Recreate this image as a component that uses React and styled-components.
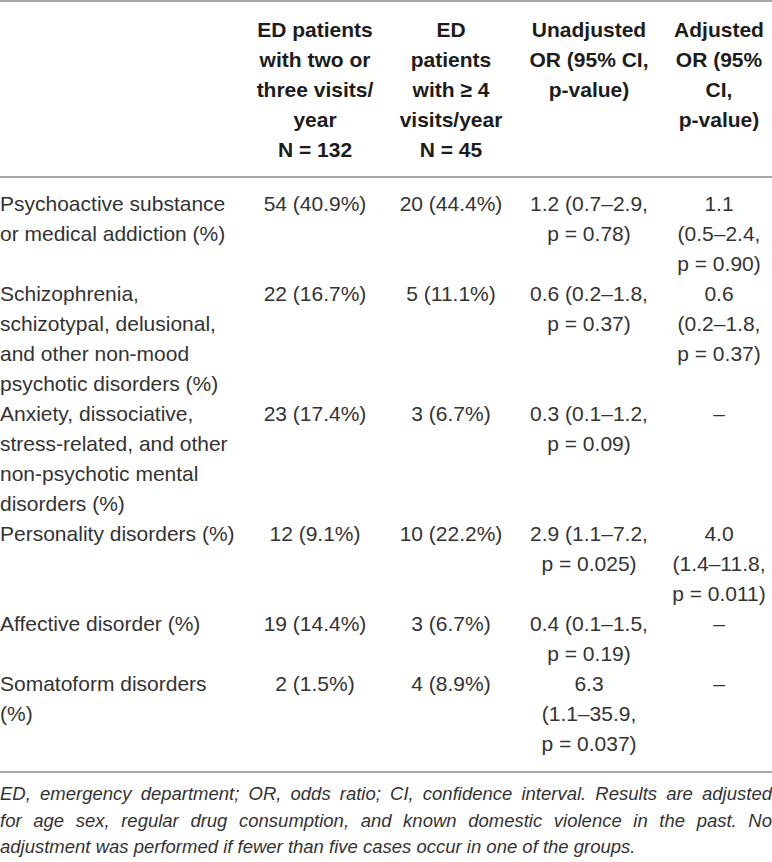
import React from 'react';
import styled, { createGlobalStyle } from 'styled-components';

const GlobalStyle = createGlobalStyle`
  html, body {
    margin: 0;
    padding: 0;
    background: #fff;
  }
  body {
    font-family: "Liberation Sans", Arial, sans-serif;
    color: #333;
  }
`;

const Page = styled.div`
  width: 772px;
`;

const Table = styled.table`
  width: 772px;
  border-collapse: collapse;
  table-layout: fixed;
  border-top: 2px solid #a8a8a8;
  border-bottom: 2px solid #a8a8a8;

  tbody tr:first-child td {
    padding-top: 11px;
  }
  tbody tr:last-child td {
    padding-bottom: 12px;
  }
`;

const Col = styled.col`
  width: ${p => p.$w}px;
`;

const HeadRow = styled.tr`
  border-bottom: 2px solid #a8a8a8;
`;

const HeadCell = styled.th`
  padding: 13px 0 11px ${p => p.$pad || 0}px;
  vertical-align: top;
  text-align: center;
  font-size: 21px;
  font-weight: bold;
  line-height: 30px;
  color: #1c1c1c;
  white-space: nowrap;
`;

const Cell = styled.td`
  padding: 0 0 0 ${p => p.$pad || 0}px;
  vertical-align: top;
  text-align: ${p => (p.$left ? 'left' : 'center')};
  font-size: 21px;
  line-height: 30px;
  color: #333;
  white-space: nowrap;
`;

const Line = styled.span`
  display: block;
`;

const Notes = styled.div`
  margin-top: 8px;
  font-size: 18.5px;
  font-style: italic;
  line-height: 26.5px;
  color: #333;
`;

const NoteLine = styled.span`
  display: block;
  text-align: ${p => (p.$last ? 'left' : 'justify')};
  text-align-last: ${p => (p.$last ? 'left' : 'justify')};
`;

const heads = [
  ['ED patients', 'with two or', 'three visits/', 'year', 'N = 132'],
  ['ED', 'patients', 'with ≥ 4', 'visits/year', 'N = 45'],
  ['Unadjusted', 'OR (95% CI,', 'p-value)'],
  ['Adjusted', 'OR (95%', 'CI,', 'p-value)'],
];

const rows = [
  {
    label: ['Psychoactive substance', 'or medical addiction (%)'],
    two: ['54 (40.9%)'],
    four: ['20 (44.4%)'],
    crude: ['1.2 (0.7–2.9,', 'p = 0.78)'],
    adj: ['1.1', '(0.5–2.4,', 'p = 0.90)'],
  },
  {
    label: ['Schizophrenia,', 'schizotypal, delusional,', 'and other non-mood', 'psychotic disorders (%)'],
    two: ['22 (16.7%)'],
    four: ['5 (11.1%)'],
    crude: ['0.6 (0.2–1.8,', 'p = 0.37)'],
    adj: ['0.6', '(0.2–1.8,', 'p = 0.37)'],
  },
  {
    label: ['Anxiety, dissociative,', 'stress-related, and other', 'non-psychotic mental', 'disorders (%)'],
    two: ['23 (17.4%)'],
    four: ['3 (6.7%)'],
    crude: ['0.3 (0.1–1.2,', 'p = 0.09)'],
    adj: ['–'],
  },
  {
    label: ['Personality disorders (%)'],
    two: ['12 (9.1%)'],
    four: ['10 (22.2%)'],
    crude: ['2.9 (1.1–7.2,', 'p = 0.025)'],
    adj: ['4.0', '(1.4–11.8,', 'p = 0.011)'],
  },
  {
    label: ['Affective disorder (%)'],
    two: ['19 (14.4%)'],
    four: ['3 (6.7%)'],
    crude: ['0.4 (0.1–1.5,', 'p = 0.19)'],
    adj: ['–'],
  },
  {
    label: ['Somatoform disorders', '(%)'],
    two: ['2 (1.5%)'],
    four: ['4 (8.9%)'],
    crude: ['6.3', '(1.1–35.9,', 'p = 0.037)'],
    adj: ['–'],
  },
];

const notes = [
  'ED, emergency department; OR, odds ratio; CI, confidence interval. Results are adjusted',
  'for age sex, regular drug consumption, and known domestic violence in the past. No',
  'adjustment was performed if fewer than five cases occur in one of the groups.',
];

const Lines = ({ items }) => items.map((t, i) => <Line key={i}>{t}</Line>);

export default function App() {
  return (
    <Page>
      <GlobalStyle />
      <Table>
        <colgroup>
          <Col $w={250} />
          <Col $w={130} />
          <Col $w={142} />
          <Col $w={134} />
          <Col $w={116} />
        </colgroup>
        <thead>
          <HeadRow>
            <HeadCell />
            {heads.map((h, i) => (
              <HeadCell key={i} $pad={i === 3 ? 10 : 0}>
                <Lines items={h} />
              </HeadCell>
            ))}
          </HeadRow>
        </thead>
        <tbody>
          {rows.map((r, i) => (
            <tr key={i}>
              <Cell $left><Lines items={r.label} /></Cell>
              <Cell><Lines items={r.two} /></Cell>
              <Cell><Lines items={r.four} /></Cell>
              <Cell><Lines items={r.crude} /></Cell>
              <Cell $pad={10}><Lines items={r.adj} /></Cell>
            </tr>
          ))}
        </tbody>
      </Table>
      <Notes>
        {notes.map((n, i) => (
          <NoteLine key={i} $last={i === notes.length - 1}>{n}</NoteLine>
        ))}
      </Notes>
    </Page>
  );
}
